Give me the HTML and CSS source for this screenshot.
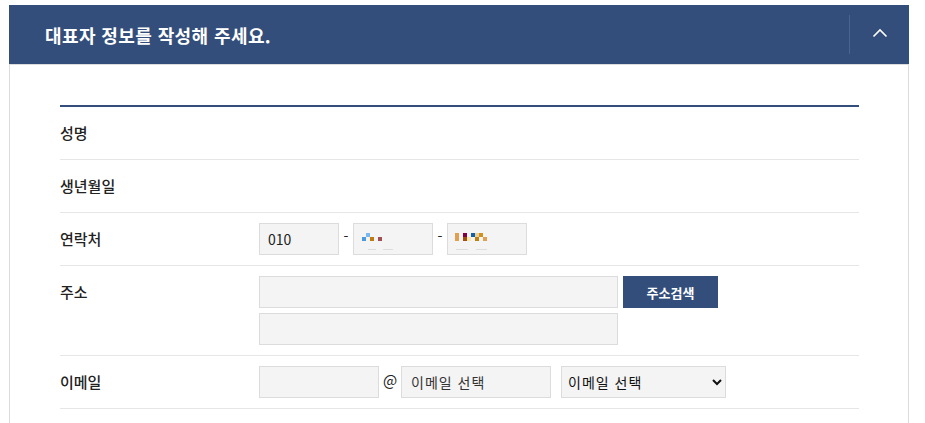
FILE: index.html
```html
<!DOCTYPE html>
<html lang="ko">

<head>
  <meta charset="UTF-8">
  <meta name="viewport" content="width=device-width, initial-scale=1.0">
  <title>대표자 정보</title>
  <link rel="stylesheet" href="styles.css">
</head>

<body>

  <div class="panel">
    <div class="panel-head">
      <h2 class="panel-title">대표자 정보를 작성해 주세요.</h2>
      <button class="toggle" type="button" aria-label="접기">
        <svg width="16" height="10" viewBox="0 0 16 10">
          <polyline points="1.5,8.5 8,2 14.5,8.5" fill="none" stroke="#fff" stroke-width="1.6" />
        </svg>
      </button>
    </div>

    <div class="panel-body">
      <table class="form-table">
        <tr>
          <th>성명</th>
          <td></td>
        </tr>
        <tr>
          <th>생년월일</th>
          <td></td>
        </tr>
        <tr>
          <th>연락처</th>
          <td>
            <div class="field-line">
              <input class="inp w80" type="text" value="010">
              <span class="sep">-</span>
              <span class="masked">
                <input class="inp w80" type="text">
                <svg class="mask" width="80" height="32" viewBox="0 0 80 32">
                  <rect x="13" y="10" width="4" height="4" fill="#7ab8f0" />
                  <rect x="9" y="14" width="4" height="4" fill="#4a9ae0" />
                  <rect x="17" y="14" width="4" height="4" fill="#c07a10" />
                  <rect x="25" y="14" width="4" height="4" fill="#a05050" />
                  <rect x="15" y="26" width="8" height="1" fill="#ddd" />
                  <rect x="30" y="26" width="10" height="1" fill="#ddd" />
                </svg>
              </span>
              <span class="sep">-</span>
              <span class="masked">
                <input class="inp w80" type="text">
                <svg class="mask" width="80" height="32" viewBox="0 0 80 32">
                  <rect x="8" y="10" width="4" height="8" fill="#e0a050" />
                  <rect x="16" y="10" width="4" height="4" fill="#800040" />
                  <rect x="16" y="14" width="4" height="4" fill="#a05010" />
                  <rect x="20" y="14" width="4" height="4" fill="#f8e8b0" />
                  <rect x="24" y="10" width="4" height="4" fill="#1060b0" />
                  <rect x="28" y="10" width="4" height="4" fill="#f0d090" />
                  <rect x="32" y="10" width="4" height="4" fill="#d09020" />
                  <rect x="28" y="14" width="4" height="4" fill="#c08010" />
                  <rect x="36" y="14" width="4" height="4" fill="#e0a050" />
                  <rect x="9" y="26" width="12" height="1" fill="#ddd" />
                  <rect x="29" y="26" width="11" height="1" fill="#ddd" />
                </svg>
              </span>
            </div>
          </td>
        </tr>
        <tr>
          <th>주소</th>
          <td>
            <div class="field-line">
              <input class="inp w359" type="text">
              <button class="btn-search" type="button">주소검색</button>
            </div>
            <div class="field-line mt5">
              <input class="inp w359" type="text">
            </div>
          </td>
        </tr>
        <tr>
          <th>이메일</th>
          <td>
            <div class="field-line">
              <input class="inp w120" type="text">
              <span class="at">@</span>
              <input class="inp w150 pad9" type="text" value="이메일 선택">
              <select class="sel">
                <option>이메일 선택</option>
                <option>naver.com</option>
                <option>gmail.com</option>
              </select>
            </div>
          </td>
        </tr>
      </table>
    </div>
  </div>

</body>

</html>
```

FILE: styles.css
```css
html {
  background-color: #fff;
}

body {
  margin: 0;
  font-family: "Noto Sans CJK KR", "Noto Sans", sans-serif;
  color: #222;
}

.panel {
  width: 900px;
  margin: 5px 0 0 9px;
}

.panel-head {
  display: flex;
  align-items: center;
  height: 59px;
  padding-left: 36px;
  background-color: #344e7b;
}

.panel-title {
  flex: 1;
  margin: 0;
  font-size: 18px;
  font-weight: 700;
  color: #fff;
  letter-spacing: 0.4px;
}

.toggle {
  display: flex;
  align-items: center;
  justify-content: center;
  width: 60px;
  height: 39px;
  padding: 0 0 3px;
  background: none;
  border: 0;
  border-left: 1px solid #4a6391;
}

.panel-body {
  border: 1px solid #dcdcdc;
  border-bottom: 0;
  padding: 40px 49px 40px 50px;
}

.form-table {
  width: 100%;
  border-collapse: collapse;
  border-top: 2px solid #344e7b;
}

.form-table tr {
  border-bottom: 1px solid #e6e6e6;
}

.form-table th {
  width: 199px;
  padding: 10px 0;
  text-align: left;
  vertical-align: top;
  font-size: 15px;
  font-weight: 500;
  line-height: 32px;
}

.form-table td {
  padding: 10px 0;
  vertical-align: top;
}

.field-line {
  display: flex;
  align-items: center;
}

.mt5 {
  margin-top: 5px;
}

.inp {
  box-sizing: border-box;
  height: 32px;
  padding: 0 8px;
  font-family: inherit;
  font-size: 14px;
  color: #222;
  background-color: #f4f4f4;
  border: 1px solid #dcdcdc;
  border-radius: 0;
  outline-color: #344e7b;
}

.w80 {
  width: 80px;
}

.w120 {
  width: 120px;
}

.w150 {
  width: 150px;
}

.w359 {
  width: 359px;
}

.pad9 {
  padding-left: 9px;
  color: #333;
  letter-spacing: 1px;
}

.sep {
  width: 14px;
  text-align: center;
  font-size: 14px;
  margin-top: -6px;
}

.masked {
  position: relative;
  display: block;
  height: 32px;
}

.mask {
  position: absolute;
  left: 0;
  top: 0;
  pointer-events: none;
}

.btn-search {
  width: 95px;
  height: 32px;
  margin-left: 5px;
  font-family: inherit;
  font-size: 13px;
  font-weight: 700;
  color: #fff;
  background-color: #344e7b;
  border: 0;
}

.at {
  width: 22px;
  text-align: center;
  font-size: 15px;
  margin-top: -6px;
}

.sel {
  box-sizing: border-box;
  width: 165px;
  height: 32px;
  margin-left: 10px;
  padding: 0 2px;
  font-family: inherit;
  font-size: 14px;
  color: #111;
  letter-spacing: 1px;
  background-color: #f4f4f4;
  border: 1px solid #dcdcdc;
  border-radius: 0;
}
```
